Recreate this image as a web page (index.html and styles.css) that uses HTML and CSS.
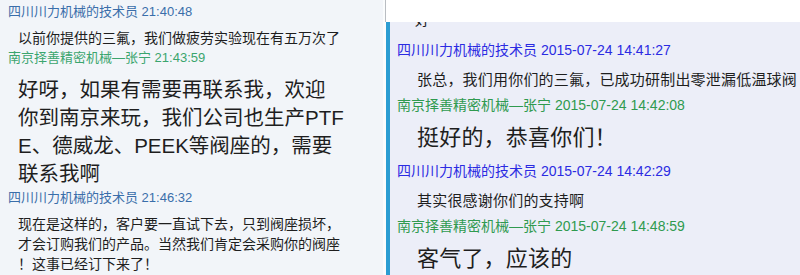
FILE: index.html
```html
<!DOCTYPE html>
<html>

<head>
  <meta charset="utf-8">
  <link rel="stylesheet" href="styles.css">
</head>

<body>
  <div class="screen">
    <section class="chat chat-left">
      <div class="head blue">四川川力机械的技术员 21:40:48</div>
      <div class="msg">以前你提供的三氟，我们做疲劳实验现在有五万次了</div>
      <div class="head green">南京择善精密机械—张宁 21:43:59</div>
      <div class="msg big">好呀，如果有需要再联系我，欢迎<br>你到南京来玩，我们公司也生产PTF<br>E、德威龙、PEEK等阀座的，需要<br>联系我啊</div>
      <div class="head blue">四川川力机械的技术员 21:46:32</div>
      <div class="msg">现在是这样的，客户要一直试下去，只到阀座损坏，<br>才会订购我们的产品。当然我们肯定会采购你的阀座<br>！这事已经订下来了！</div>
    </section>

    <section class="chat chat-right">
      <div class="topbar"></div>
      <div class="log">
        <div class="msg cut">好</div>
        <div class="head blue">四川川力机械的技术员 2015-07-24 14:41:27</div>
        <div class="msg">张总，我们用你们的三氟，已成功研制出零泄漏低温球阀</div>
        <div class="head green">南京择善精密机械—张宁 2015-07-24 14:42:08</div>
        <div class="msg big">挺好的，恭喜你们！</div>
        <div class="head blue">四川川力机械的技术员 2015-07-24 14:42:29</div>
        <div class="msg">其实很感谢你们的支持啊</div>
        <div class="head green">南京择善精密机械—张宁 2015-07-24 14:48:59</div>
        <div class="msg big">客气了，应该的</div>
      </div>
    </section>
  </div>
</body>

</html>
```

FILE: styles.css
```css
* {
  box-sizing: border-box;
}

body {
  margin: 0;
  background: #fafcfd;
  font-family: "Liberation Sans", "Noto Sans CJK SC", sans-serif;
  color: #1e1e1e;
}

.screen {
  display: flex;
  width: 800px;
  height: 275px;
  overflow: hidden;
}

.chat {
  overflow: hidden;
  white-space: nowrap;
}

/* left window */
.chat-left {
  width: 383px;
  flex: none;
  background: #f2f5f9;
  padding: 2px 0 0 8px;
}

.chat-left .head {
  font-size: 13px;
  line-height: 20px;
}

.chat-left .head.blue {
  color: #3a6eaa;
}

.chat-left .head.green {
  color: #3ba56e;
}

.chat-left .msg {
  margin: 6px 0 0 10px;
  font-size: 14px;
  line-height: 20px;
}

.chat-left .msg.big {
  margin-top: 8px;
  font-size: 20.5px;
  line-height: 28px;
}

/* right window */
.chat-right {
  flex: 1;
  margin-left: 2px;
  display: flex;
  flex-direction: column;
}

.topbar {
  height: 22px;
  flex: none;
  background: #fff;
  border-left: 1px solid #b9bdc2;
}

.log {
  flex: 1;
  overflow: hidden;
  margin-left: 1px;
  border-left: 4px solid #2c9dd2;
  background: #eceef8;
  padding-left: 7px;
}

.log .head {
  font-size: 14px;
  line-height: 20px;
}

.log .head.blue {
  color: #2b2be2;
}

.log .head.green {
  color: #2f9a4f;
}

.log .msg {
  margin: 8px 0 3px 20px;
  font-size: 15px;
  line-height: 24px;
  letter-spacing: 0.2px;
}

.log .msg.big {
  font-size: 22px;
  line-height: 30px;
  margin-bottom: 8px;
}

.log .msg.cut {
  margin: -14px 0 8px 18px;
}
```
